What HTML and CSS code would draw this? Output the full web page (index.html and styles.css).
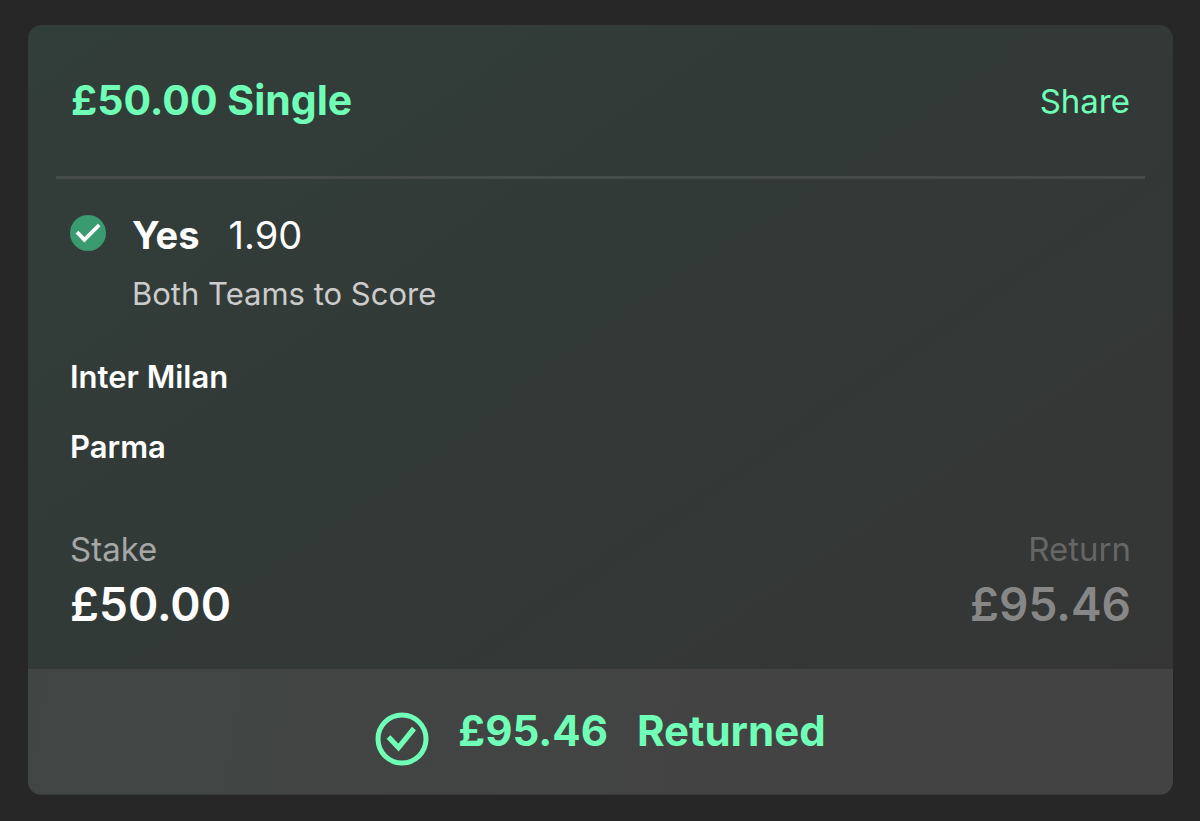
FILE: index.html
```
<!DOCTYPE html>
<html lang="en">
<head>
<meta charset="utf-8">
<meta name="viewport" content="width=device-width, initial-scale=1">
<title>Bet slip</title>
<link rel="stylesheet" href="styles.css">
</head>
<body>
<main class="slip">
  <div class="slip-body">
    <header class="slip-header">
      <h1 class="title">£50.00 Single</h1>
      <button class="share" type="button">Share</button>
    </header>
    <section class="selection">
      <svg class="won-icon" viewBox="0 0 36 36" aria-hidden="true">
        <circle cx="18" cy="18" r="18" fill="#3a9a70"/>
        <path d="M7 17.2l7.4 7.6L29.2 10" fill="none" stroke="#fff" stroke-width="3.8"/>
      </svg>
      <div>
        <p class="pick"><strong>Yes</strong><span>1.90</span></p>
        <p class="market">Both Teams to Score</p>
      </div>
    </section>
    <ul class="teams">
      <li>Inter Milan</li>
      <li>Parma</li>
    </ul>
    <dl class="totals">
      <div class="total">
        <dt>Stake</dt>
        <dd>£50.00</dd>
      </div>
      <div class="total total-return">
        <dt>Return</dt>
        <dd>£95.46</dd>
      </div>
    </dl>
  </div>
  <footer class="result">
    <svg class="result-icon" viewBox="0 0 54 54" aria-hidden="true">
      <circle cx="27" cy="27" r="24" fill="none" stroke="#6fffb7" stroke-width="5"/>
      <path d="M13.5 25l10 10.6L39 16.5" fill="none" stroke="#6fffb7" stroke-width="5.2"/>
    </svg>
    <p class="result-text"><span>£95.46</span><span>Returned</span></p>
  </footer>
</main>
</body>
</html>
```
FILE: styles.css
```
* {
  box-sizing: border-box;
}

body {
  margin: 0;
  padding: 25px 27px 26px 28px;
  background: #272727;
  color: #fff;
  font-family: Inter, "Liberation Sans", sans-serif;
}

h1, p, ul, dl, dd {
  margin: 0;
  padding: 0;
}

.slip {
  border-radius: 14px;
  overflow: hidden;
  background: linear-gradient(145deg, #323e39 0%, #323937 50%, #353636 80%, #353535 100%);
}

.slip-body {
  padding: 0 28px 37px;
}

.slip-header {
  display: flex;
  justify-content: space-between;
  align-items: center;
  padding: 48px 15px 47px;
  border-bottom: 3px solid #454b49;
}

.title {
  font-size: 41px;
  line-height: 54px;
  padding-bottom: 2px;
  font-weight: 700;
  color: #6fffb7;
}

.share {
  padding: 0;
  border: 0;
  background: none;
  color: #6fffb7;
  font: inherit;
  font-size: 33px;
  line-height: 56px;
}

.selection {
  display: flex;
  gap: 26px;
  padding: 32px 14px 0;
}

.won-icon {
  width: 36px;
  height: 36px;
  margin-top: 4px;
}

.pick {
  display: flex;
  gap: 29px;
  font-size: 38px;
  line-height: 48px;
}

.market {
  margin-top: 15px;
  font-size: 31px;
  line-height: 40px;
  color: #ccc;
}

.teams {
  display: grid;
  gap: 30px;
  padding: 43px 14px 0;
  list-style: none;
  font-size: 31px;
  line-height: 40px;
  font-weight: 600;
}

.totals {
  display: flex;
  justify-content: space-between;
  padding: 62px 14px 0;
}

.total dt {
  font-size: 33px;
  line-height: 40px;
  color: #a6a8a7;
}

.total dd {
  margin-top: 7px;
  font-size: 46px;
  line-height: 56px;
  font-weight: 600;
}

.total-return {
  text-align: right;
}

.total-return dt {
  color: #656666;
}

.total-return dd {
  color: #868786;
}

.result {
  display: flex;
  justify-content: center;
  align-items: flex-end;
  gap: 29px;
  padding: 34px 0 28px;
  border-bottom: 1px solid #393939;
  background: linear-gradient(100deg, #414645, #434343 60%);
}

.result-icon {
  width: 54px;
  height: 54px;
}

.result-text {
  display: flex;
  gap: 29px;
  padding-bottom: 7px;
  font-size: 42px;
  line-height: 56px;
  font-weight: 700;
  color: #6fffb7;
}
```
